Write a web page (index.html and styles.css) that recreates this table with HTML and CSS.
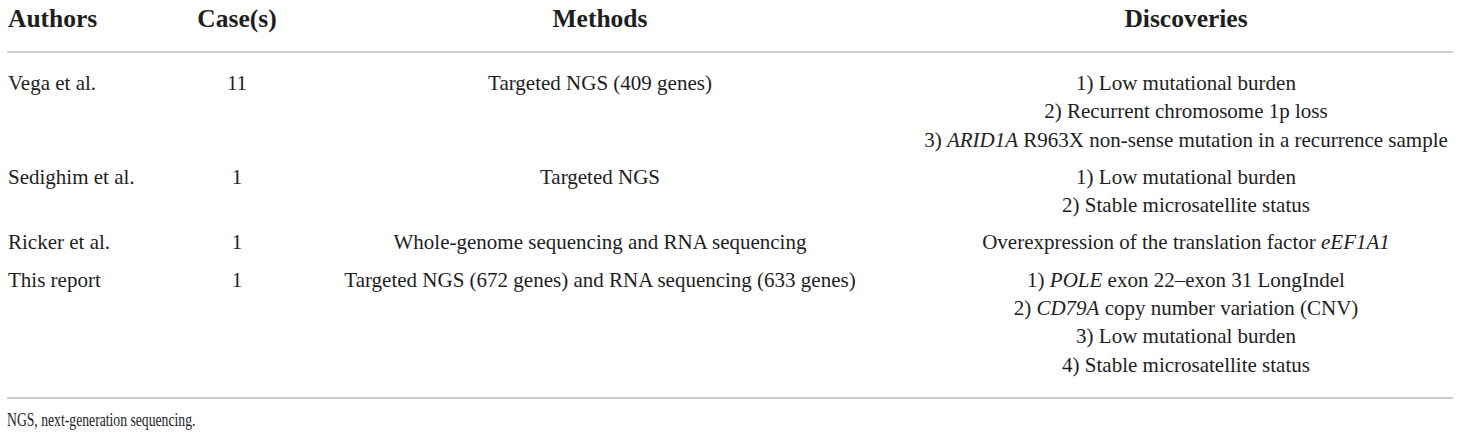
FILE: index.html
```html
<!DOCTYPE html>
<html lang="en">
<head>
<meta charset="utf-8">
<title>Table</title>
<link rel="stylesheet" href="styles.css">
</head>
<body>
<div class="wrap">
  <table class="tbl">
    <colgroup>
      <col class="c-auth">
      <col class="c-case">
      <col class="c-meth">
      <col class="c-disc">
    </colgroup>
    <thead>
      <tr>
        <th class="left">Authors</th>
        <th>Case(s)</th>
        <th>Methods</th>
        <th>Discoveries</th>
      </tr>
    </thead>
    <tbody>
      <tr class="first">
        <td class="left">Vega et al.</td>
        <td>11</td>
        <td>Targeted NGS (409 genes)</td>
        <td>1) Low mutational burden<br>2) Recurrent chromosome 1p loss<br>3) <i>ARID1A</i> R963X non-sense mutation in a recurrence sample</td>
      </tr>
      <tr>
        <td class="left">Sedighim et al.</td>
        <td>1</td>
        <td>Targeted NGS</td>
        <td>1) Low mutational burden<br>2) Stable microsatellite status</td>
      </tr>
      <tr>
        <td class="left">Ricker et al.</td>
        <td>1</td>
        <td>Whole-genome sequencing and RNA sequencing</td>
        <td>Overexpression of the translation factor <i>eEF1A1</i></td>
      </tr>
      <tr class="last">
        <td class="left">This report</td>
        <td>1</td>
        <td>Targeted NGS (672 genes) and RNA sequencing (633 genes)</td>
        <td>1) <i>POLE</i> exon 22–exon 31 LongIndel<br>2) <i>CD79A</i> copy number variation (CNV)<br>3) Low mutational burden<br>4) Stable microsatellite status</td>
      </tr>
    </tbody>
  </table>
  <p class="note">NGS, next-generation sequencing.</p>
</div>
</body>
</html>
```

FILE: styles.css
```css
html, body {
  margin: 0;
  padding: 0;
  background: #ffffff;
}

.wrap {
  padding: 0 7px;
  font-family: "Liberation Serif", "Times New Roman", serif;
  color: #1e1e1e;
}

.tbl {
  width: 1446px;
  border-collapse: collapse;
  table-layout: fixed;
}

.c-auth { width: 186px; }
.c-case { width: 88px; }
.c-meth { width: 638px; }
.c-disc { width: 534px; }

.tbl th {
  font-size: 25.5px;
  line-height: 30px;
  font-weight: bold;
  text-align: center;
  padding: 4px 0 17px;
  border-bottom: 2px solid #cdcdcd;
  white-space: nowrap;
}

.tbl td {
  font-size: 21px;
  line-height: 28.3px;
  text-align: center;
  vertical-align: top;
  padding: 4.5px 0;
  white-space: nowrap;
}

.tbl th.left,
.tbl td.left {
  text-align: left;
  padding-left: 1px;
}

.tbl tr.first td {
  padding-top: 16px;
}

.tbl tr.last td {
  padding-bottom: 18px;
}

.tbl tbody tr.last td {
  border-bottom: 2px solid #cdcdcd;
}

.note {
  margin: 0;
  padding-top: 10px;
  font-size: 18px;
  line-height: 22px;
  transform: scaleX(0.76);
  transform-origin: left center;
  white-space: nowrap;
}
```
